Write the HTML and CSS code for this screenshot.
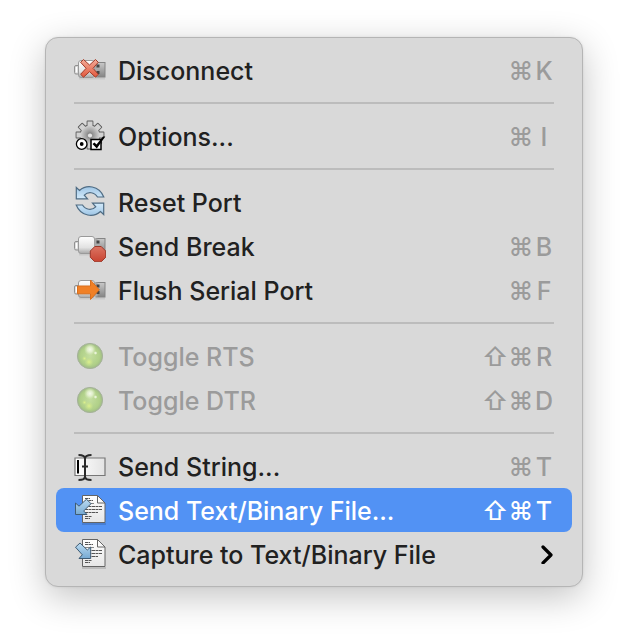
FILE: index.html
```html
<!DOCTYPE html>
<html lang="en">
<head>
<meta charset="utf-8">
<title>Connection menu</title>
<link rel="stylesheet" href="styles.css">
</head>
<body>
<svg class="defs" aria-hidden="true">
  <defs>
    <linearGradient id="metal" x1="0" y1="0" x2="0" y2="1"><stop offset="0" stop-color="#c9c9c9"/><stop offset="1" stop-color="#858585"/></linearGradient>
    <linearGradient id="shell" x1="0" y1="0" x2="0" y2="1"><stop offset="0" stop-color="#fff"/><stop offset=".65" stop-color="#e2e2e2"/><stop offset="1" stop-color="#a8a8a8"/></linearGradient>
    <linearGradient id="red" x1="0" y1="0" x2="0" y2="1"><stop offset="0" stop-color="#f2ab98"/><stop offset="1" stop-color="#e2583d"/></linearGradient>
    <linearGradient id="stop" x1="0" y1="0" x2="0" y2="1"><stop offset="0" stop-color="#dc7462"/><stop offset="1" stop-color="#c84432"/></linearGradient>
    <linearGradient id="blue" x1="0" y1="0" x2="0" y2="1"><stop offset="0" stop-color="#bddcf2"/><stop offset="1" stop-color="#75a9d2"/></linearGradient>
    <linearGradient id="sky" x1="0" y1="0" x2="0" y2="1"><stop offset="0" stop-color="#9fc6e6"/><stop offset="1" stop-color="#d3eafa"/></linearGradient>
    <linearGradient id="paper" x1="0" y1="0" x2="0" y2="1"><stop offset="0" stop-color="#fff"/><stop offset="1" stop-color="#e6e6e6"/></linearGradient>
    <linearGradient id="field" x1="0" y1="0" x2="1" y2="0"><stop offset="0" stop-color="#fff"/><stop offset="1" stop-color="#e3e3e3"/></linearGradient>
    <radialGradient id="hub"><stop offset="0" stop-color="#777"/><stop offset=".5" stop-color="#a5a5a5"/><stop offset="1" stop-color="#d2d2d2"/></radialGradient>
    <radialGradient id="ball" cx=".5" cy=".5" r=".5"><stop offset="0" stop-color="#c4de9f"/><stop offset=".75" stop-color="#b0d088"/><stop offset="1" stop-color="#a0bb87"/></radialGradient>
    <radialGradient id="shine"><stop offset="0" stop-color="#f4faea"/><stop offset=".45" stop-color="#eaf4d8" stop-opacity=".8"/><stop offset="1" stop-color="#dcecc0" stop-opacity="0"/></radialGradient>
    <radialGradient id="glow"><stop offset="0" stop-color="#dcf08c"/><stop offset="1" stop-color="#cfe68c" stop-opacity="0"/></radialGradient>
    <path id="teeth" d="M13.500 1.500h5v27h-5zM2.500 12.500h27v5h-27zM8.200 3.700L27.300 22.800l-3.500 3.500L4.700 7.200zM27.300 7.200L8.200 26.300l-3.500-3.500L23.800 3.700z"/>
    <symbol id="plug" viewBox="0 0 32 32">
      <path d="M5 24.500h26" stroke="#000" stroke-opacity=".07" stroke-width="2"/>
      <rect x="22" y="8.500" width="9" height="14.500" fill="url(#metal)" stroke="#858585"/>
      <path d="M5 11.500H2q-1.500 0-1.500 1.500v5.500q0 1.500 1.500 1.500h3z" fill="#d5d5d5" stroke="#909090"/>
      <path d="M2.500 13v5.500" stroke="#fff" stroke-width="1.500"/>
      <rect x="4.500" y="6.500" width="16" height="17" rx="2.500" fill="url(#shell)" stroke="#9a9a9a"/>
      <path d="M20.500 8.500h3v14h-3z" fill="#aaa"/>
      <path d="M22.500 10.500h3v3h-3zM22.500 17h3v3h-3z" fill="#444"/>
    </symbol>
    <symbol id="led" viewBox="0 0 32 32">
      <circle cx="16" cy="16" r="12.600" fill="url(#ball)" stroke="#a6b29b"/>
      <circle cx="16" cy="9.500" r="6" fill="url(#shine)"/>
      <circle cx="21.500" cy="13" r="2" fill="url(#shine)"/>
      <circle cx="15" cy="22" r="4.500" fill="url(#glow)"/>
      <circle cx="10.500" cy="18.500" r="2.500" fill="url(#glow)"/>
    </symbol>
    <symbol id="page" viewBox="0 0 32 32">
      <path d="M8 30h24" stroke="#000" stroke-opacity=".18" stroke-width="1.500"/>
      <path d="M8.500 1.500h15l7.500 7.500v19.500H8.500z" fill="url(#paper)" stroke="#646464"/>
      <path d="M23.500 1.500V9H31z" fill="#fafafa" stroke="#646464"/>
      <path d="M11 4.500h5M11 6.500h8M11 12.500h17M11 15.500h17M11 18.500h13M11 22.500h7M11 24.500h5" stroke="#555" stroke-dasharray="3 .5"/>
      <path d="M11 9.500h9" stroke="#888"/>
    </symbol>
  </defs>
</svg>

<div class="menu" role="menu" aria-label="Connection">
  <button class="item" role="menuitem">
    <svg class="icon" viewBox="0 0 32 32" aria-hidden="true"><use href="#plug"/><path d="M9.500 5.500l6 5.500 6-5.500 2.800 2.800-5.300 6 5.300 6-2.800 2.900-6-5.500-6 5.500-2.900-2.900 5.500-6-5.500-6z" fill="url(#red)" stroke="#a23c29"/></svg>
    <span class="label">Disconnect</span>
    <kbd class="keys"><span>⌘</span><span>K</span></kbd>
  </button>
  <hr class="rule">
  <button class="item" role="menuitem">
    <svg class="icon" viewBox="0 0 32 32" aria-hidden="true">
      <g fill="#d2d2d2" stroke="#5c5c5c" stroke-width="1.800" stroke-linejoin="round"><use href="#teeth"/><circle cx="16" cy="15" r="9.500"/></g>
      <use href="#teeth" fill="#d2d2d2"/>
      <circle cx="16" cy="15" r="9.500" fill="url(#hub)"/>
      <circle cx="16" cy="15.500" r="2.600" fill="#e4e4e4" stroke="#888"/>
      <circle cx="7.700" cy="24" r="5.300" fill="#fff" stroke="#000" stroke-width="1.300"/>
      <circle cx="7.700" cy="24" r="1.900" fill="#000"/>
      <path d="M17 19.500h10v10H17z" fill="#fff" stroke="#000" stroke-width="1.500"/>
      <path d="M18.500 24l2-1.500 2 2 6.500-8h2.300l-8.500 12z" fill="#000"/>
    </svg>
    <span class="label">Options...</span>
    <kbd class="keys"><span>⌘</span><span>I</span></kbd>
  </button>
  <hr class="rule">
  <button class="item" role="menuitem">
    <svg class="icon" viewBox="0 0 32 32" aria-hidden="true">
      <g fill="url(#sky)" stroke="#4f6c84" stroke-width="1.200">
        <path id="sweep" d="M2.300 1.500l3.200 3C12-1.500 25-1 29.800 11h-6.300C20.500 6 14 5.300 10.300 9.200l3.200 3.600H2.300z"/>
        <use href="#sweep" transform="rotate(180 16 15)"/>
      </g>
    </svg>
    <span class="label">Reset Port</span>
  </button>
  <button class="item" role="menuitem">
    <svg class="icon" viewBox="0 0 32 32" aria-hidden="true"><use href="#plug"/><path d="M20.800 16.500h6.400l4.500 4.500v6.300l-4.500 4.500h-6.400l-4.500-4.500V21z" fill="url(#stop)" stroke="#9c3829"/></svg>
    <span class="label">Send Break</span>
    <kbd class="keys"><span>⌘</span><span>B</span></kbd>
  </button>
  <button class="item" role="menuitem">
    <svg class="icon" viewBox="0 0 32 32" aria-hidden="true"><use href="#plug"/><path d="M3.500 12h13V6l8.800 9.800-8.800 9.700v-5.700h-13z" fill="#f08026" stroke="#d96f1d"/></svg>
    <span class="label">Flush Serial Port</span>
    <kbd class="keys"><span>⌘</span><span>F</span></kbd>
  </button>
  <hr class="rule">
  <button class="item" role="menuitem" disabled>
    <svg class="icon" viewBox="0 0 32 32" aria-hidden="true"><use href="#led"/></svg>
    <span class="label">Toggle RTS</span>
    <kbd class="keys"><span>⇧</span><span>⌘</span><span>R</span></kbd>
  </button>
  <button class="item" role="menuitem" disabled>
    <svg class="icon" viewBox="0 0 32 32" aria-hidden="true"><use href="#led"/></svg>
    <span class="label">Toggle DTR</span>
    <kbd class="keys"><span>⇧</span><span>⌘</span><span>D</span></kbd>
  </button>
  <hr class="rule">
  <button class="item" role="menuitem">
    <svg class="icon" viewBox="0 0 32 32" aria-hidden="true">
      <path d="M1 8h30v17.500H1z" fill="url(#field)" stroke="#777" stroke-width="1.200"/>
      <path d="M4 10v13.500" stroke="#000" stroke-width="2"/>
      <path d="M4.500 5c4 0 6.500.5 6.500 3.500 0-3 2.500-3.500 6.500-3.500M11 8v19M4.500 30c4 0 6.500-.5 6.500-3.500 0 3 2.500 3.500 6.500 3.500M8 16.500h6" fill="none" stroke="#2a2a2a" stroke-width="2"/>
    </svg>
    <span class="label">Send String...</span>
    <kbd class="keys"><span>⌘</span><span>T</span></kbd>
  </button>
  <button class="item selected" role="menuitem">
    <svg class="icon" viewBox="0 0 32 32" aria-hidden="true"><use href="#page"/><path d="M1.500 9l3.500 3.200 7.500-7 4.500 4.500-7.300 7.300 3.300 3.500H1.500z" fill="url(#blue)" stroke="#3f5c74"/></svg>
    <span class="label">Send Text/Binary File...</span>
    <kbd class="keys"><span>⇧</span><span>⌘</span><span>T</span></kbd>
  </button>
  <button class="item" role="menuitem" aria-haspopup="menu">
    <svg class="icon" viewBox="0 0 32 32" aria-hidden="true"><use href="#page"/><path d="M1.500 9.200L6 5l7.300 7 3.400-3v11.500H5l3.300-3.700z" fill="url(#blue)" stroke="#3f5c74"/></svg>
    <span class="label">Capture to Text/Binary File</span>
    <svg class="chevron" viewBox="0 0 14 20" aria-hidden="true"><path d="M3 3l8 8-8 8" fill="none" stroke="#000" stroke-width="3.200" stroke-linecap="round" stroke-linejoin="round"/></svg>
  </button>
</div>
</body>
</html>
```
FILE: styles.css
```css
* {
  box-sizing: border-box;
}

body {
  margin: 0;
  padding: 37px 45px 52px;
  background: #fff;
  color: #212121;
  font-family: Inter, "Liberation Sans", sans-serif;
  font-size: 25px;
  font-weight: 450;
  line-height: 32px;
}

.defs {
  position: absolute;
  width: 0;
  height: 0;
}

.menu {
  padding: 10px;
  border: 1px solid #b5b5b5;
  border-radius: 13px;
  background: #d9d9d9;
  box-shadow: 0 10px 36px rgba(0, 0, 0, 0.24), 0 0 3px rgba(0, 0, 0, 0.08);
}

.item {
  display: flex;
  align-items: center;
  gap: 12px;
  width: 100%;
  height: 44px;
  margin: 0;
  padding: 0 18px;
  border: 0;
  border-radius: 8px;
  background: none;
  color: inherit;
  font: inherit;
  text-align: left;
}

.icon {
  flex: none;
  width: 32px;
  height: 32px;
}

.label {
  flex: 1;
  padding-top: 2px;
  white-space: nowrap;
}

.keys {
  display: flex;
  padding-top: 2px;
  color: #9b9b9b;
  font: inherit;
}

.keys span {
  width: 26px;
  text-align: center;
}

.keys span:last-child {
  width: 20px;
}

.item:disabled {
  color: #9b9b9b;
}

.selected {
  background: #5292f4;
  color: #fff;
  font-weight: 500;
}

.selected .keys {
  color: #fff;
}

.chevron {
  width: 14px;
  height: 20px;
}

.rule {
  height: 2px;
  margin: 10px 18px;
  border: 0;
  background: #bcbcbc;
}
```
